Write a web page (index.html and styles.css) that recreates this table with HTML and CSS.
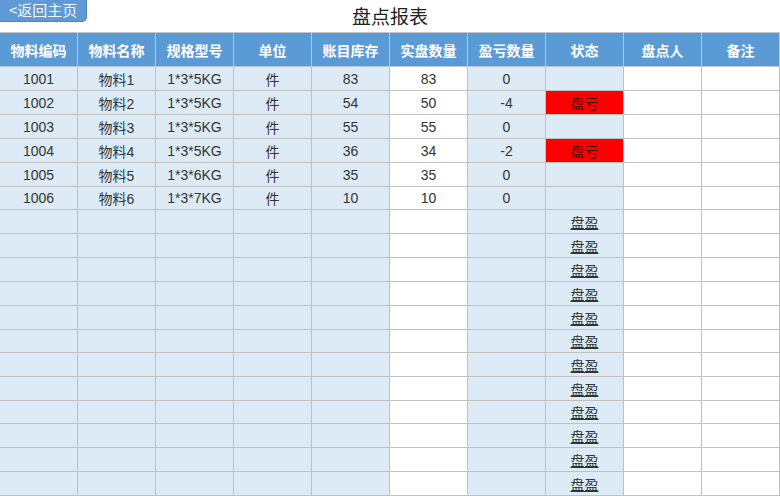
FILE: index.html
```html
<!DOCTYPE html>
<html lang="zh">
<head>
<meta charset="utf-8">
<title>盘点报表</title>
<link rel="stylesheet" href="styles.css">
</head>
<body>
<div class="topbar">
  <div class="left"><a class="back" href="#">&lt;返回主页</a></div>
  <h1 class="title">盘点报表</h1>
  <div class="right"></div>
</div>
<div class="sheet">
  <div class="h">物料编码</div><div class="h">物料名称</div><div class="h">规格型号</div><div class="h">单位</div><div class="h">账目库存</div><div class="h">实盘数量</div><div class="h">盈亏数量</div><div class="h">状态</div><div class="h">盘点人</div><div class="h">备注</div>

  <div class="b">1001</div><div class="b">物料1</div><div class="b">1*3*5KG</div><div class="b">件</div><div class="b">83</div><div class="w">83</div><div class="b">0</div><div class="b"></div><div class="w"></div><div class="w"></div>
  <div class="b">1002</div><div class="b">物料2</div><div class="b">1*3*5KG</div><div class="b">件</div><div class="b">54</div><div class="w">50</div><div class="b">-4</div><div class="red">盘亏</div><div class="w"></div><div class="w"></div>
  <div class="b">1003</div><div class="b">物料3</div><div class="b">1*3*5KG</div><div class="b">件</div><div class="b">55</div><div class="w">55</div><div class="b">0</div><div class="b"></div><div class="w"></div><div class="w"></div>
  <div class="b">1004</div><div class="b">物料4</div><div class="b">1*3*5KG</div><div class="b">件</div><div class="b">36</div><div class="w">34</div><div class="b">-2</div><div class="red">盘亏</div><div class="w"></div><div class="w"></div>
  <div class="b">1005</div><div class="b">物料5</div><div class="b">1*3*6KG</div><div class="b">件</div><div class="b">35</div><div class="w">35</div><div class="b">0</div><div class="b"></div><div class="w"></div><div class="w"></div>
  <div class="b">1006</div><div class="b">物料6</div><div class="b">1*3*7KG</div><div class="b">件</div><div class="b">10</div><div class="w">10</div><div class="b">0</div><div class="b"></div><div class="w"></div><div class="w"></div>

  <div class="b"></div><div class="b"></div><div class="b"></div><div class="b"></div><div class="b"></div><div class="w"></div><div class="b"></div><div class="b gain">盘盈</div><div class="w"></div><div class="w"></div>
  <div class="b"></div><div class="b"></div><div class="b"></div><div class="b"></div><div class="b"></div><div class="w"></div><div class="b"></div><div class="b gain">盘盈</div><div class="w"></div><div class="w"></div>
  <div class="b"></div><div class="b"></div><div class="b"></div><div class="b"></div><div class="b"></div><div class="w"></div><div class="b"></div><div class="b gain">盘盈</div><div class="w"></div><div class="w"></div>
  <div class="b"></div><div class="b"></div><div class="b"></div><div class="b"></div><div class="b"></div><div class="w"></div><div class="b"></div><div class="b gain">盘盈</div><div class="w"></div><div class="w"></div>
  <div class="b"></div><div class="b"></div><div class="b"></div><div class="b"></div><div class="b"></div><div class="w"></div><div class="b"></div><div class="b gain">盘盈</div><div class="w"></div><div class="w"></div>
  <div class="b"></div><div class="b"></div><div class="b"></div><div class="b"></div><div class="b"></div><div class="w"></div><div class="b"></div><div class="b gain">盘盈</div><div class="w"></div><div class="w"></div>
  <div class="b"></div><div class="b"></div><div class="b"></div><div class="b"></div><div class="b"></div><div class="w"></div><div class="b"></div><div class="b gain">盘盈</div><div class="w"></div><div class="w"></div>
  <div class="b"></div><div class="b"></div><div class="b"></div><div class="b"></div><div class="b"></div><div class="w"></div><div class="b"></div><div class="b gain">盘盈</div><div class="w"></div><div class="w"></div>
  <div class="b"></div><div class="b"></div><div class="b"></div><div class="b"></div><div class="b"></div><div class="w"></div><div class="b"></div><div class="b gain">盘盈</div><div class="w"></div><div class="w"></div>
  <div class="b"></div><div class="b"></div><div class="b"></div><div class="b"></div><div class="b"></div><div class="w"></div><div class="b"></div><div class="b gain">盘盈</div><div class="w"></div><div class="w"></div>
  <div class="b"></div><div class="b"></div><div class="b"></div><div class="b"></div><div class="b"></div><div class="w"></div><div class="b"></div><div class="b gain">盘盈</div><div class="w"></div><div class="w"></div>
  <div class="b"></div><div class="b"></div><div class="b"></div><div class="b"></div><div class="b"></div><div class="w"></div><div class="b"></div><div class="b gain">盘盈</div><div class="w"></div><div class="w"></div>
</div>
</body>
</html>
```
FILE: styles.css
```css
html, body {
  margin: 0;
  padding: 0;
  background: #ffffff;
}
body {
  font-family: "Liberation Sans", "Noto Sans CJK SC", sans-serif;
  color: #333333;
  width: 780px;
  overflow: hidden;
}
.topbar {
  display: grid;
  grid-template-columns: 1fr auto 1fr;
  height: 32px;
  align-items: start;
}
.left {
  display: flex;
  align-items: flex-start;
}
.back {
  display: block;
  box-sizing: border-box;
  width: 87px;
  height: 22px;
  padding-left: 9px;
  background: #5e9ad6;
  border: 1px solid #4a86c5;
  border-top: none;
  border-left: none;
  border-radius: 0 0 5px 0;
  color: #f2f7fc;
  font-family: "Noto Sans CJK SC", sans-serif;
  font-size: 15px;
  line-height: 20px;
  text-decoration: none;
  letter-spacing: 0;
}
.title {
  margin: 0;
  padding-top: 4px;
  font-family: "Noto Sans CJK SC", sans-serif;
  font-weight: 400;
  font-size: 19px;
  line-height: 24px;
  color: #222222;
}
.sheet {
  display: grid;
  grid-template-columns: repeat(10, 78px);
  grid-template-rows: 34px 24px 24px 24px 24px 24px 23px 24px 24px 24px 24px 24px 23px 24px 24px 23px 24px 24px 24px;
  border-top: 1px solid #c4c8cc;
}
.sheet > div {
  box-sizing: border-box;
  border-right: 1px solid #c0c0c0;
  border-bottom: 1px solid #c0c0c0;
  display: flex;
  align-items: center;
  justify-content: center;
  font-size: 14px;
  white-space: nowrap;
}
.h {
  background: #5b9bd5;
  color: #ffffff;
  font-family: "Noto Sans CJK SC", sans-serif;
  font-weight: 700;
  font-size: 14px;
  border-right-color: #b9c9da !important;
  border-bottom-color: #b9c9da !important;
}
.b {
  background: #ddebf7;
}
.w {
  background: #ffffff;
}
.red {
  background: #ff0000;
  color: #3a0000;
  font-family: "Noto Sans CJK SC", sans-serif;
}
.gain {
  font-family: "Noto Sans CJK SC", sans-serif;
  color: #333333;
  text-decoration: underline;
  text-underline-offset: 1px;
}
```
